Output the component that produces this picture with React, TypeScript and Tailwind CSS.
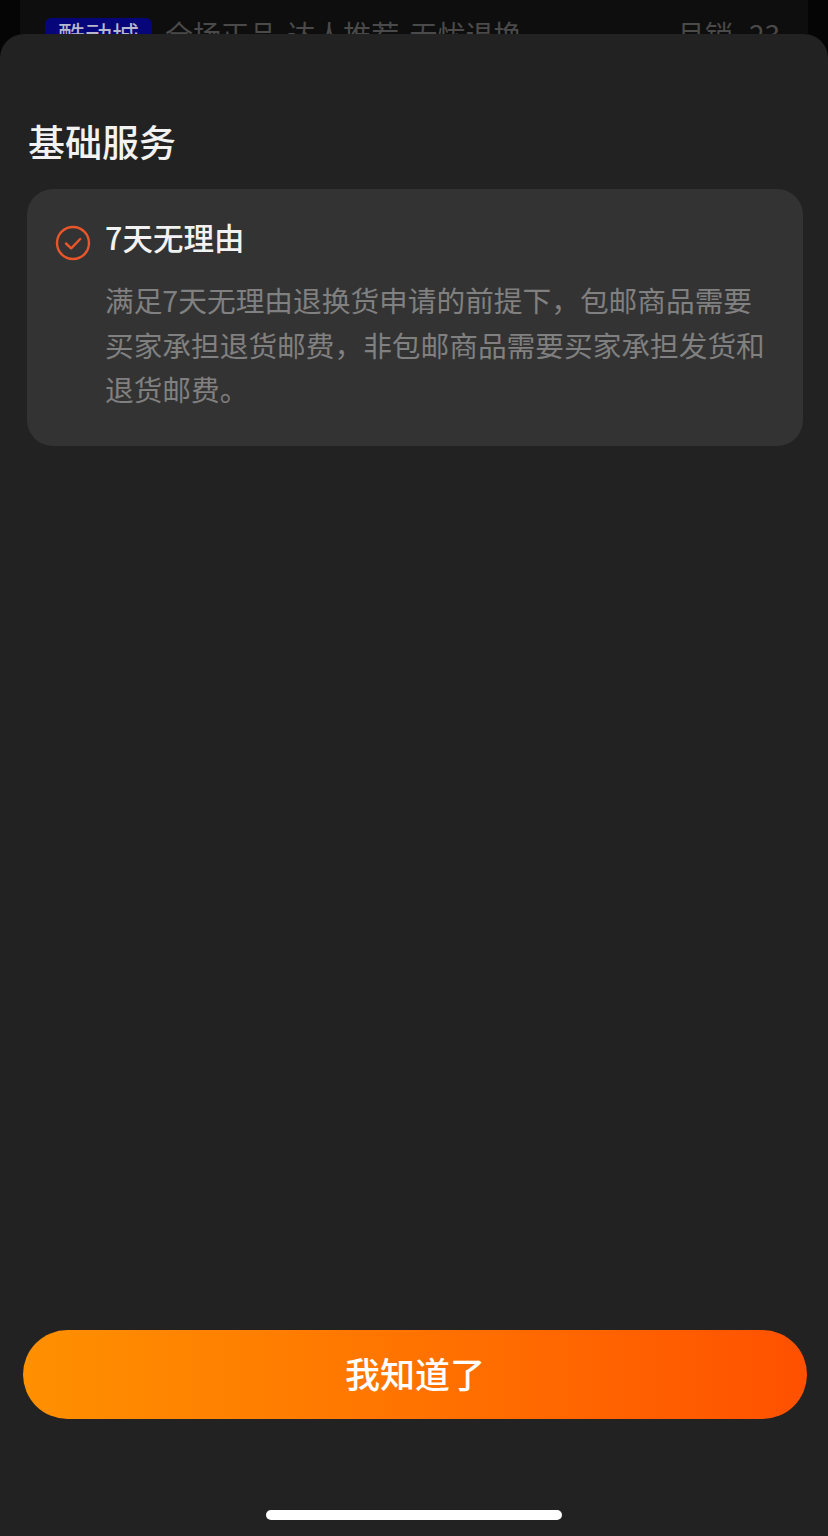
const cjk = 'font-["Noto_Sans_CJK_SC","Noto_Sans",sans-serif]'

function CheckCircle() {
  return (
    <svg width="36" height="36" viewBox="0 0 36 36" fill="none" className="shrink-0">
      <circle cx="18" cy="18" r="16" stroke="#e8562a" strokeWidth="2.4" />
      <path d="M11 18.5l5.2 4.8 9-9.3" stroke="#e8562a" strokeWidth="2.4" strokeLinecap="round" strokeLinejoin="round" />
    </svg>
  )
}

export default function App() {
  return (
    <div className={`h-[1536px] w-[828px] overflow-hidden bg-[#050505] ${cjk}`}>
      {/* Page behind the sheet */}
      <div className="ml-[20px] mr-[20px] h-[34px] overflow-hidden bg-[#0e0e0e] pl-[25px] pr-[28px] pt-[18px]">
        <div className="flex items-center">
          <span className="flex h-[32px] w-[107px] items-center justify-center rounded-[6px] bg-[#06067a] text-[27px] leading-none text-[#b8b8cc]">酷动城</span>
          <span className="ml-[13px] text-[28px] leading-[32px] text-[#4a4a4a] [word-spacing:4px]">全场正品 达人推荐 无忧退换</span>
          <span className="ml-auto text-[28px] leading-[32px] text-[#4a4a4a] [word-spacing:10px]">月销 23</span>
        </div>
      </div>

      {/* Sheet */}
      <div className="relative flex h-[1502px] flex-col rounded-t-[24px] bg-[#222222]">
        <h2 className="ml-[28px] mt-[84px] text-[37px] font-medium leading-[46px] text-[#f2f2f2]">基础服务</h2>

        <div className="ml-[27px] mr-[25px] mt-[25px] h-[257px] rounded-[26px] bg-[#333333] pl-[28px] pr-[32px] pt-[28px]">
          <div className="flex items-start gap-[14px]">
            <div className="mt-[8px]"><CheckCircle /></div>
            <div className="-mt-[3px] text-[30.5px] font-medium leading-[46px] text-[#f2f2f2]">7天无理由</div>
          </div>
          <p className="ml-[50px] mt-[17px] text-[28.7px] leading-[44.5px] text-[#808080]">
            满足7天无理由退换货申请的前提下，包邮商品需要买家承担退货邮费，非包邮商品需要买家承担发货和退货邮费。
          </p>
        </div>

        <button className="ml-[23px] mr-[21px] mt-auto flex h-[89px] items-center justify-center rounded-full bg-gradient-to-r from-[#ff9000] to-[#ff5000] pb-[2px] text-[35px] font-medium text-white">
          我知道了
        </button>

        <div className="mx-auto mb-[16px] mt-[91px] h-[10px] w-[296px] rounded-full bg-white" />
      </div>
    </div>
  )
}
